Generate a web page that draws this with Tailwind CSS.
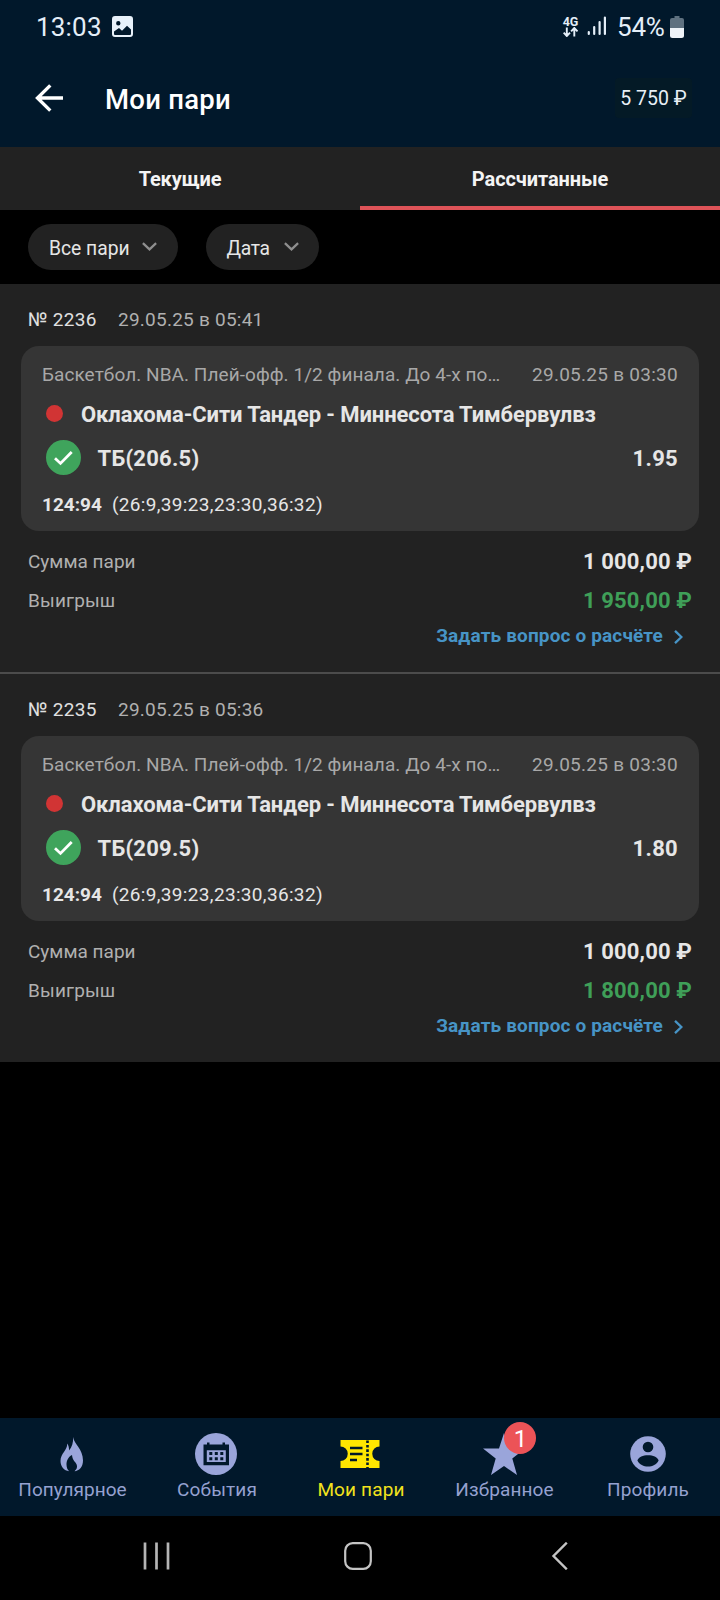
<!DOCTYPE html>
<html lang="ru">
<head>
<meta charset="utf-8">
<meta name="viewport" content="width=device-width, initial-scale=1">
<title>Мои пари</title>
<script src="https://cdn.jsdelivr.net/npm/@tailwindcss/browser@4"></script>
</head>
<body class="bg-black">
<div class="flex h-[1600px] w-[720px] flex-col overflow-hidden bg-black font-[Roboto,'Noto_Sans',sans-serif] text-[19px] leading-none whitespace-nowrap text-[#e6e6e6]">

  <header class="h-[147px] shrink-0 bg-[#01182b]">
    <!-- status bar -->
    <div class="flex h-[53px] items-center justify-between pr-[36px] pl-[36px] text-[26px] text-[#e4eef8]">
      <div class="flex items-center">
        <span class="w-[76px] tracking-[0.2px]">13:03</span>
        <svg class="h-[21px] w-[21px]" viewBox="0 0 21 21"><path fill="#e8f1fa" fill-rule="evenodd" d="M3 0h15a3 3 0 0 1 3 3v15a3 3 0 0 1-3 3H3a3 3 0 0 1-3-3V3a3 3 0 0 1 3-3ZM6.300 5a2.200 2.200 0 1 0 0 4.400a2.200 2.200 0 0 0 0-4.400ZM2 15.500V18q0 1 1 1h15q1 0 1-1v-4.500L15 9.800l-5 5L7 12Z"/></svg>
      </div>
      <div class="flex items-center">
        <div class="flex w-[17px] flex-col items-center">
          <span class="text-[12.500px] leading-[11px] font-bold">4G</span>
          <svg class="h-[10px] w-[15px]" viewBox="0 0 15 10" fill="none" stroke="#e4eef8" stroke-width="1.900"><path d="M3.800 .5V9M.6 5.600L3.800 9L7 5.600M11.300 9.500V1M8.100 4.400L11.300 1L14.500 4.400"/></svg>
        </div>
        <svg class="mt-[-1px] ml-[8px] h-[20px] w-[20px]" viewBox="0 0 20 20" stroke="#e4eef8" stroke-width="2.200" stroke-linecap="round"><path d="M1.800 16v2M7.200 11v7M12.600 6v12M17.900 1.500V18"/></svg>
        <span class="ml-[10px] w-[50px] tracking-[-0.2px]">54%</span>
        <svg class="ml-[3px] h-[22px] w-[14px]" viewBox="0 0 14 22"><path fill="#5f7180" d="M4.500 0h5v2H12a2 2 0 0 1 2 2v9H0V4a2 2 0 0 1 2-2h2.500Z"/><path fill="#eef3f8" d="M0 12h14v7.500a2.500 2.500 0 0 1-2.500 2.500h-9A2.500 2.500 0 0 1 0 19.500Z"/></svg>
      </div>
    </div>
    <!-- app bar -->
    <div class="flex h-[90px] items-center pr-[28px] pl-[35px]">
      <svg class="h-[28px] w-[28px]" viewBox="0 0 28 28" fill="none" stroke="#fff" stroke-width="3.400"><path d="M15.300 1.400L2.500 14L15.300 26.600M2 14H28"/></svg>
      <h1 class="mt-[4px] ml-[42px] text-[27.500px] font-medium tracking-[0.25px] text-white">Мои пари</h1>
      <div class="ml-auto flex h-[40px] w-[77px] items-center justify-center rounded bg-[#041a26] pt-[1px] text-[19.500px] text-[#e8f0f6]">5 750 ₽</div>
    </div>
  </header>

  <nav class="flex h-[63px] shrink-0 bg-[#222] text-[20px] font-bold text-[#f4f4f4]">
    <div class="flex flex-1 items-center justify-center border-b-4 border-[#222] pt-1 tracking-[-0.15px]">Текущие</div>
    <div class="flex flex-1 items-center justify-center border-b-4 border-[#de5358] pt-1 tracking-[-0.1px]">Рассчитанные</div>
  </nav>

  <div class="flex h-[74px] shrink-0 items-center gap-[28px] pl-[28px] text-[19.300px]">
    <div class="flex h-[46px] w-[150px] items-center justify-between rounded-full bg-[#222] pr-[21px] pl-[21px]"><span class="mt-[4px]">Все пари</span>
      <svg class="mb-px h-[9px] w-[15px]" viewBox="0 0 15 9" fill="none" stroke="#8f8f8f" stroke-width="2.200"><path d="M.9 1.100L7.500 7.400L14.100 1.100"/></svg>
    </div>
    <div class="flex h-[46px] w-[113px] items-center justify-between rounded-full bg-[#222] pr-[20.500px] pl-[20.500px]"><span class="mt-[4px] tracking-[-0.3px]">Дата</span>
      <svg class="mb-px h-[9px] w-[15px]" viewBox="0 0 15 9" fill="none" stroke="#8f8f8f" stroke-width="2.200"><path d="M.9 1.100L7.500 7.400L14.100 1.100"/></svg>
    </div>
  </div>

  <main class="flex-1">
    <article class="h-[390px] border-b-2 border-[#4c4c4c] bg-[#222]">
      <div class="flex h-[62px] items-center px-[28px] pt-[8px]">
        <span class="w-[90px] tracking-[0.3px] text-[#e0e0e0]">№ 2236</span><span class="tracking-[0.24px] text-[#b0b0b0]">29.05.25 в 05:41</span>
      </div>
      <section class="mx-[21px] h-[185px] rounded-[18px] bg-[#353535] px-[21px] pt-[9px]">
        <div class="flex h-[40px] items-center justify-between pb-[2px] text-[#a8a8a8]"><span class="tracking-[0.06px]">Баскетбол. NBA. Плей-офф. 1/2 финала. До 4-х по…</span><span class="tracking-[0.27px]">29.05.25 в 03:30</span></div>
        <div class="flex h-[39px] items-center pl-[4px]"><i class="mt-[-2px] h-[17px] w-[17px] rounded-full bg-[#d13434]"></i><b class="ml-[18px] text-[22px] tracking-[-0.1px]">Оклахома-Сити Тандер - Миннесота Тимбервулвз</b></div>
        <div class="flex h-[48px] items-center pl-[3.500px] text-[22px] font-bold">
          <svg class="mt-[-2px] h-[35px] w-[35px]" viewBox="0 0 35 35"><circle cx="17.500" cy="17.500" r="17.500" fill="#3fa45c"/><path d="M9 18.200L14.500 23.400L25.700 11.900" fill="none" stroke="#fff" stroke-width="2.800"/></svg>
          <span class="mt-[2px] ml-[17px] tracking-[0.25px]">ТБ(206.5)</span><span class="mt-[2px] ml-auto tracking-[0.29px]">1.95</span>
        </div>
        <div class="flex h-[46px] items-center pb-[2px]"><b class="w-[70px]">124:94</b><span class="tracking-[0.33px]">(26:9,39:23,23:30,36:32)</span></div>
      </section>
      <div class="px-[28px] pt-[11px]">
        <div class="flex h-[39px] items-center justify-between"><span class="text-[#b0b0b0]">Сумма пари</span><b class="text-[22px] tracking-[0.15px]">1 000,00 ₽</b></div>
        <div class="flex h-[39px] items-center justify-between"><span class="tracking-[0.15px] text-[#b0b0b0]">Выигрыш</span><b class="text-[22px] tracking-[0.15px] text-[#3f9f58]">1 950,00 ₽</b></div>
        <div class="flex h-[31px] items-center justify-end pr-[9px] text-[#4794c6]"><b class="tracking-[0.15px]">Задать вопрос о расчёте</b><svg class="mt-[2px] ml-[11px] h-[14px] w-[9px]" viewBox="0 0 9 14" fill="none" stroke="currentColor" stroke-width="2.300"><path d="M1 .9L7.400 7L1 13.100"/></svg></div>
      </div>
    </article>

    <article class="h-[388px] bg-[#222]">
      <div class="flex h-[62px] items-center px-[28px] pt-[8px]">
        <span class="w-[90px] tracking-[0.3px] text-[#e0e0e0]">№ 2235</span><span class="tracking-[0.24px] text-[#b0b0b0]">29.05.25 в 05:36</span>
      </div>
      <section class="mx-[21px] h-[185px] rounded-[18px] bg-[#353535] px-[21px] pt-[9px]">
        <div class="flex h-[40px] items-center justify-between pb-[2px] text-[#a8a8a8]"><span class="tracking-[0.06px]">Баскетбол. NBA. Плей-офф. 1/2 финала. До 4-х по…</span><span class="tracking-[0.27px]">29.05.25 в 03:30</span></div>
        <div class="flex h-[39px] items-center pl-[4px]"><i class="mt-[-2px] h-[17px] w-[17px] rounded-full bg-[#d13434]"></i><b class="ml-[18px] text-[22px] tracking-[-0.1px]">Оклахома-Сити Тандер - Миннесота Тимбервулвз</b></div>
        <div class="flex h-[48px] items-center pl-[3.500px] text-[22px] font-bold">
          <svg class="mt-[-2px] h-[35px] w-[35px]" viewBox="0 0 35 35"><circle cx="17.500" cy="17.500" r="17.500" fill="#3fa45c"/><path d="M9 18.200L14.500 23.400L25.700 11.900" fill="none" stroke="#fff" stroke-width="2.800"/></svg>
          <span class="mt-[2px] ml-[17px] tracking-[0.25px]">ТБ(209.5)</span><span class="mt-[2px] ml-auto tracking-[0.29px]">1.80</span>
        </div>
        <div class="flex h-[46px] items-center pb-[2px]"><b class="w-[70px]">124:94</b><span class="tracking-[0.33px]">(26:9,39:23,23:30,36:32)</span></div>
      </section>
      <div class="px-[28px] pt-[11px]">
        <div class="flex h-[39px] items-center justify-between"><span class="text-[#b0b0b0]">Сумма пари</span><b class="text-[22px] tracking-[0.15px]">1 000,00 ₽</b></div>
        <div class="flex h-[39px] items-center justify-between"><span class="tracking-[0.15px] text-[#b0b0b0]">Выигрыш</span><b class="text-[22px] tracking-[0.15px] text-[#3f9f58]">1 800,00 ₽</b></div>
        <div class="flex h-[31px] items-center justify-end pr-[9px] text-[#4794c6]"><b class="tracking-[0.15px]">Задать вопрос о расчёте</b><svg class="mt-[2px] ml-[11px] h-[14px] w-[9px]" viewBox="0 0 9 14" fill="none" stroke="currentColor" stroke-width="2.300"><path d="M1 .9L7.400 7L1 13.100"/></svg></div>
      </div>
    </article>
  </main>

  <!-- bottom tabs -->
  <nav class="grid h-[98px] shrink-0 grid-cols-5 bg-[#01182b] text-[#95a1d0]">
    <div class="flex flex-col items-center pt-[15px]">
      <svg class="h-[42px] w-[42px]" viewBox="0 0 42 42"><path fill="#9aa5da" d="M22 4C23 11 32 16 32 27.500C32 34 28 38 23.500 38.200C25.500 36.500 26.500 34.500 25.800 32C25 29 21.500 28 21 22C17 24 15.500 28 15.500 31.500C15.500 34.500 16.500 36.800 18.200 38.300C13 37.500 9.500 33.500 9.500 28C9.500 20 16.500 17.500 16.200 10.500C17.500 12.500 18.300 15 18 17.500C21 14 22.500 9.500 22 4Z"/></svg>
      <span class="mt-[5px] ml-px tracking-[0.05px]">Популярное</span>
    </div>
    <div class="flex flex-col items-center pt-[15px]">
      <svg class="h-[42px] w-[42px]" viewBox="0 0 42 42"><circle cx="21" cy="21" r="21" fill="#9aa5da"/><path fill="#01182b" fill-rule="evenodd" d="M8.500 11.500h3.500v-2h2.500v2h13v-2h2.500v2h4V32.300H8.500ZM11.800 17.200V29h19V17.200Z"/><path fill="#01182b" d="M14.300 19h3v3h-3ZM19.800 19h3v3h-3ZM25.300 19h3v3h-3ZM14.300 24.200h3v3h-3ZM19.800 24.200h3v3h-3ZM25.300 24.200h3v3h-3Z"/></svg>
      <span class="mt-[5px] ml-[2px] tracking-[0.15px]">События</span>
    </div>
    <div class="flex flex-col items-center pt-[15px] text-[#f2e21c]">
      <svg class="h-[42px] w-[42px]" viewBox="0 0 42 42"><path fill="#ffe600" d="M1.500 7H40.500V13.500A7 7 0 0 0 40.500 28V35H1.500V28A7 7 0 0 0 1.500 13.500Z"/><path stroke="#01182b" stroke-width="2.500" fill="none" d="M11 15H23.500M11 21H23.500M11 27H18"/><path stroke="#01182b" stroke-width="2.600" stroke-dasharray="2.600 1.800" d="M28.500 7.500V35"/></svg>
      <span class="mt-[5px] ml-[2px] tracking-[0.15px]">Мои пари</span>
    </div>
    <div class="flex flex-col items-center pt-[15px]">
      <div class="relative h-[42px] w-[42px]">
        <svg class="h-[42px] w-[42px]" viewBox="0 0 42 42"><path fill="#9aa5da" d="M21 0L26 15.500H42L29.300 25.500L34 42L21 33L8 42L12.700 25.500L0 15.500L16 15.500Z"/></svg>
        <span class="absolute -top-[11px] left-[21px] flex h-[32px] w-[32px] items-center justify-center rounded-full bg-[#ec5357] pt-px pl-px text-[24px] text-white">1</span>
      </div>
      <span class="mt-[5px] ml-px tracking-[0.1px]">Избранное</span>
    </div>
    <div class="flex flex-col items-center pt-[15px]">
      <svg class="h-[42px] w-[42px]" viewBox="0 0 42 42"><circle cx="21" cy="21" r="17.800" fill="#9aa5da"/><circle cx="21" cy="14" r="5.300" fill="#01182b"/><path fill="#01182b" d="M10.400 27.500C11.500 24.200 16 22.300 21 22.300S30.500 24.200 31.600 27.500C29.500 31.500 25.500 33.600 21 33.600S12.500 31.500 10.400 27.500Z"/></svg>
      <span class="mt-[5px] tracking-[0.1px]">Профиль</span>
    </div>
  </nav>

  <!-- system navigation -->
  <div class="flex h-[84px] shrink-0 items-center bg-black pb-[4px] pl-[143px]">
    <svg class="h-[28px] w-[27px]" viewBox="0 0 27 28" stroke="#b4b4b4" stroke-width="2.700"><path d="M2 .5V27.500M13.500 .5V27.500M25 .5V27.500"/></svg>
    <svg class="ml-[174px] h-[28px] w-[28px]" viewBox="0 0 28 28" fill="none" stroke="#c4c4c4" stroke-width="2.200"><rect x="1.200" y="1.200" width="25.600" height="25.600" rx="7.500"/></svg>
    <svg class="ml-[179px] h-[28px] w-[17px]" viewBox="0 0 17 28" fill="none" stroke="#c4c4c4" stroke-width="2.400"><path d="M15.800 .7L2.500 14L15.800 27.300"/></svg>
  </div>
</div>
</body>
</html>
